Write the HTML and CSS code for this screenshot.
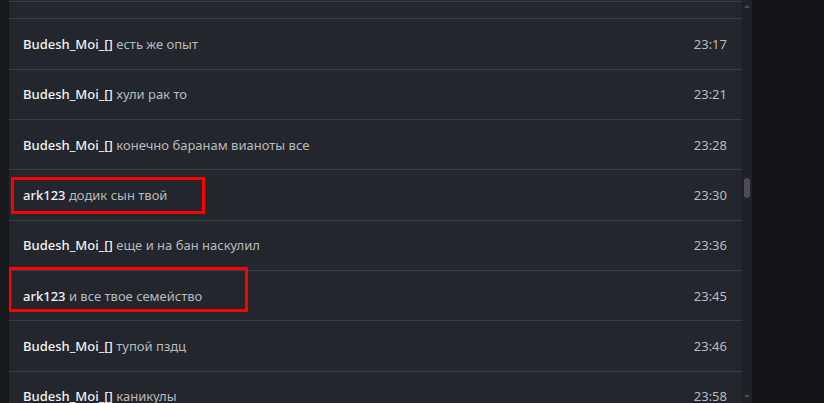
FILE: index.html
```html
<!DOCTYPE html>
<html lang="ru">
<head>
    <meta charset="UTF-8">
    <meta name="viewport" content="width=device-width, initial-scale=1.0">
    <title>Chat log</title>
    <link rel="stylesheet" href="styles.css">
</head>
<body>
    <div class="side"></div>

    <div class="panel">
        <div class="list">
            <div class="row top"></div>
            <div class="row"><span class="msg"><b>Budesh_Moi_[]</b> есть же опыт</span><span class="time">23:17</span></div>
            <div class="row"><span class="msg"><b>Budesh_Moi_[]</b> хули рак то</span><span class="time">23:21</span></div>
            <div class="row"><span class="msg"><b>Budesh_Moi_[]</b> конечно баранам вианоты все</span><span class="time">23:28</span></div>
            <div class="row"><span class="msg"><b>ark123</b> додик сын твой</span><span class="time">23:30</span></div>
            <div class="row"><span class="msg"><b>Budesh_Moi_[]</b> еще и на бан наскулил</span><span class="time">23:36</span></div>
            <div class="row"><span class="msg"><b>ark123</b> и все твое семейство</span><span class="time">23:45</span></div>
            <div class="row"><span class="msg"><b>Budesh_Moi_[]</b> тупой пздц</span><span class="time">23:46</span></div>
            <div class="row"><span class="msg"><b>Budesh_Moi_[]</b> каникулы</span><span class="time">23:58</span></div>
        </div>

        <div class="mark mark-one"></div>
        <div class="mark mark-two"></div>
    </div>

    <div class="scrollbar">
        <span class="arrow up"></span>
        <span class="thumb"></span>
        <span class="arrow down"></span>
    </div>

    <div class="outside"></div>
</body>
</html>
```

FILE: styles.css
```css
html, body {
    height: 100%;
}
body {
    margin: 0;
    display: flex;
    overflow: hidden;
    background-color: #141518;
    font-family: 'Noto Sans', 'Open Sans', Arial, sans-serif;
    font-size: 13px;
}
.side {
    width: 9px;
    background-color: #18191c;
}
.panel {
    position: relative;
    width: 733px;
    background-color: #23262d;
    overflow: hidden;
}
.list {
    margin-top: 1px;
    border-top: 1px solid #3a3d44;
}
.row {
    height: 49.36px;
    border-bottom: 1px solid #3a3d44;
    display: flex;
    align-items: center;
    justify-content: space-between;
    padding: 0 15px 0 14px;
}
.row.top {
    height: 16.3px;
}
.msg {
    color: #b9bbbe;
}
.msg b {
    color: #f2f3f5;
    font-weight: 500;
}
.time {
    color: #b9bbbe;
}
.mark {
    position: absolute;
    border: 3px solid #ff0000;
    box-sizing: border-box;
}
.mark-one {
    left: 2px;
    top: 177px;
    width: 194px;
    height: 37px;
}
.mark-two {
    left: -1px;
    top: 267px;
    width: 240px;
    height: 45px;
}
.scrollbar {
    position: relative;
    width: 10px;
    background-color: #1f2127;
}
.thumb {
    position: absolute;
    left: 2px;
    top: 178px;
    width: 6px;
    height: 20px;
    border-radius: 3px;
    background-color: #4a4d55;
}
.arrow {
    position: absolute;
    left: 2px;
    width: 0;
    height: 0;
    border-left: 3px solid transparent;
    border-right: 3px solid transparent;
}
.arrow.up {
    top: 5px;
    border-bottom: 3px solid #4a4d55;
}
.arrow.down {
    top: 395px;
    border-top: 3px solid #4a4d55;
}
.outside {
    flex: 1;
    background-color: #141518;
}
```
